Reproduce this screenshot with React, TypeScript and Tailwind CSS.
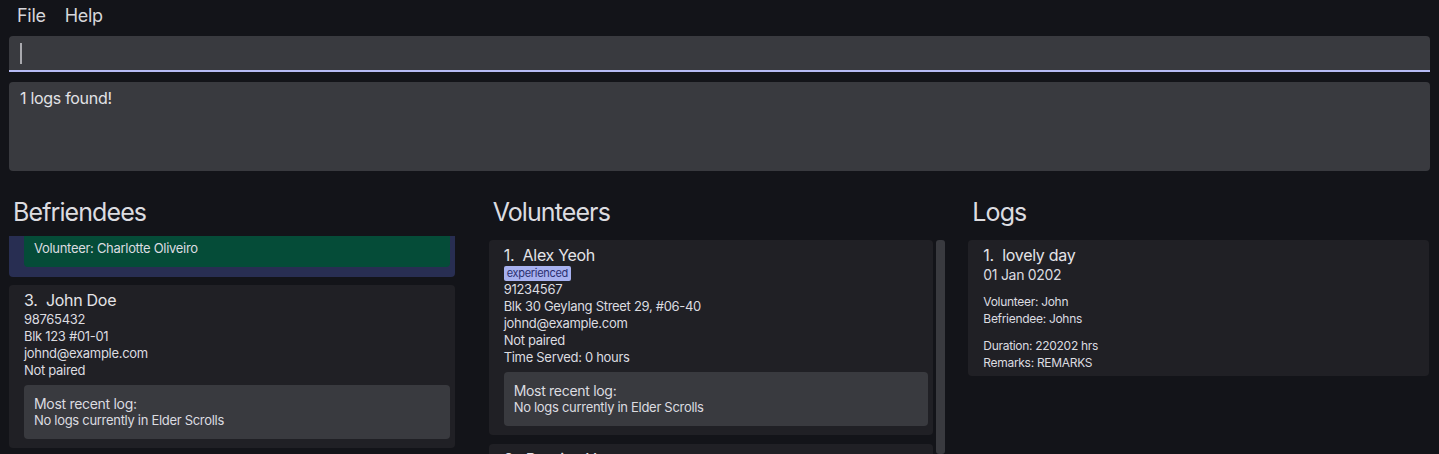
import React from 'react';

type Person = { idx: number; name: string; tags?: string[]; phone: string; address: string; email: string; pairing: string; timeServed?: string };

const volunteers: Person[] = [
  { idx: 1, name: 'Alex Yeoh', tags: ['experienced'], phone: '91234567', address: 'Blk 30 Geylang Street 29, #06-40', email: 'johnd@example.com', pairing: 'Not paired', timeServed: 'Time Served: 0 hours' },
  { idx: 2, name: 'Bernice Yu', phone: '99272758', address: 'Blk 30 Lorong 3 Serangoon Gardens, #07-18', email: 'berniceyu@example.com', pairing: 'Not paired', timeServed: 'Time Served: 0 hours' },
];

const RecentLog = () => (
  <div className="mt-[6px] rounded-[4px] bg-[#393a3f] px-[10px] py-[10px] text-[13px] leading-[17px] text-[#dcdce0]">
    <div className="text-[14px]">Most recent log:</div>
    <div>No logs currently in Elder Scrolls</div>
  </div>
);

const PersonCard = ({ p }: { p: Person }) => (
  <div className="rounded-[4px] bg-[#202025] pl-[15px] pr-[5px] pt-[5px] pb-[9px] text-[#dcdce0]">
    <div className="text-[16px] leading-[21px] text-[#e4e4e8]">{p.idx}.&nbsp; {p.name}</div>
    {p.tags && (
      <div className="flex gap-1">
        {p.tags.map((t) => (
          <span key={t} className="rounded-[2px] bg-[#a7b1ef] px-[3px] text-[11px] leading-[15px] text-[#2b3070]">{t}</span>
        ))}
      </div>
    )}
    <div className="text-[13px] leading-[17px]">
      <div>{p.phone}</div>
      <div>{p.address}</div>
      <div>{p.email}</div>
      <div>{p.pairing}</div>
      {p.timeServed && <div>{p.timeServed}</div>}
    </div>
    <RecentLog />
  </div>
);

const Heading = ({ children }: { children: React.ReactNode }) => (
  <h2 className="pl-[13px] text-[25px] leading-[31px] tracking-[-0.9px] text-[#dcdce0]">{children}</h2>
);

export default function App() {
  return (
    <div className="flex h-[454px] w-[1439px] flex-col overflow-hidden bg-[#131419] tracking-[-0.3px]" style={{ fontFamily: 'Inter, "Noto Sans", sans-serif' }}>
      <div className="flex h-[31px] items-center gap-[19px] pl-[17px] text-[18px] text-[#d6d6da]">
        <span>File</span>
        <span>Help</span>
      </div>
      <div className="flex flex-col gap-[10px] px-[9px] pt-[5px]">
        <div className="flex h-[36px] items-center rounded-t-[4px] border-b-2 border-[#b6bbf4] bg-[#393a3f] pl-[11px]">
          <div className="h-[21px] w-[2px] bg-[#a9a9ae]" />
        </div>
        <div className="h-[89px] rounded-[4px] bg-[#393a3f] px-[11px] pt-[6px] text-[16px] leading-[20px] text-[#e2e2e6]">1 logs found!</div>
      </div>
      <div className="mt-[26px] grid flex-1 grid-cols-3 overflow-hidden">
        <div className="flex min-h-0 flex-col">
          <Heading>Befriendees</Heading>
          <div className="mt-[8px] min-h-0 flex-1 overflow-hidden pl-[9px] pr-[25px]">
            <div className="-mt-[102px] flex flex-col gap-[8px]">
              <div className="rounded-[4px] bg-[#282e52] pl-[15px] pr-[5px] pt-[5px] pb-[10px] text-[#dcdce0]">
                <div className="text-[16px] leading-[21px]">2.&nbsp; Bernice Yu</div>
                <div className="text-[13px] leading-[17px]">
                  <div>99272758</div>
                  <div>Blk 30 Lorong 3 Serangoon Gardens</div>
                  <div>berniceyu@example.com</div>
                </div>
                <div className="mt-[6px] rounded-[4px] bg-[#054c38] px-[10px] pt-[6px] pb-[10px] text-[13px] leading-[17px]">
                  <div>Paired</div>
                  <div>Volunteer: Charlotte Oliveiro</div>
                </div>
              </div>
              <PersonCard p={{ idx: 3, name: 'John Doe', phone: '98765432', address: 'Blk 123 #01-01', email: 'johnd@example.com', pairing: 'Not paired' }} />
            </div>
          </div>
        </div>
        <div className="flex min-h-0 flex-col">
          <Heading>Volunteers</Heading>
          <div className="mt-[8px] flex min-h-0 flex-1 gap-[3px] overflow-hidden pl-[9px] pr-[14px] pt-[4px]">
            <div className="flex flex-1 flex-col gap-[9px]">
              {volunteers.map((v) => <PersonCard key={v.idx} p={v} />)}
            </div>
            <div className="w-[9px] shrink-0 rounded-[3px] bg-[#393a3f]" />
          </div>
        </div>
        <div className="flex min-h-0 flex-col">
          <Heading>Logs</Heading>
          <div className="mt-[8px] min-h-0 flex-1 overflow-hidden pl-[9px] pr-[10px] pt-[4px]">
            <div className="rounded-[4px] bg-[#202025] pl-[15px] pt-[5px] pb-[5px] text-[#dcdce0]">
              <div className="text-[16px] leading-[21px] text-[#e4e4e8]">1.&nbsp; lovely day</div>
              <div className="text-[14px] leading-[17px]">01 Jan 0202</div>
              <div className="mt-[10px] text-[12px] leading-[17px]">
                <div>Volunteer: John</div>
                <div>Befriendee: Johns</div>
              </div>
              <div className="mt-[10px] text-[12px] leading-[17px]">
                <div>Duration: 220202 hrs</div>
                <div>Remarks: REMARKS</div>
              </div>
            </div>
          </div>
        </div>
      </div>
    </div>
  );
}
